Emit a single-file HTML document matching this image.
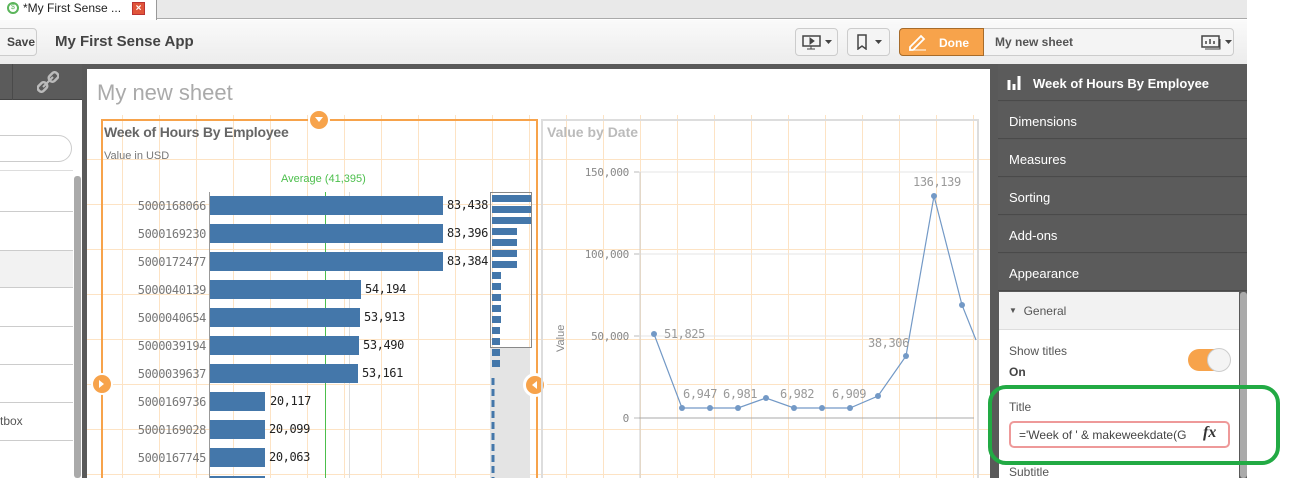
<!DOCTYPE html>
<html style="width:1293px;height:478px;overflow:hidden"><head><meta charset="utf-8"><style>
*{margin:0;padding:0;box-sizing:border-box}
body{width:1293px;height:478px;overflow:hidden;font-family:"Liberation Sans",sans-serif;background:#fff;position:relative}
.a{position:absolute}
.mono{font-family:"DejaVu Sans Mono","Liberation Mono",monospace;font-size:12px;letter-spacing:-0.4px}
.rp{left:998px;width:242px;height:37px;color:#fff;font-size:13px;padding:12px 0 0 11px;border-bottom:1px solid #4a4a4a;background:#5b5b5b}
</style></head><body>
<div style="position:absolute;left:0;top:0;width:1293px;height:478px;overflow:hidden">
<!-- tab bar -->
<div class="a" style="left:0;top:0;width:1247px;height:19px;background:#e9e9e9;border-bottom:1px solid #aaa"></div>
<div class="a" style="left:0;top:0;width:157px;height:20px;background:#fff;border-right:1px solid #999"></div>
<div class="a" style="left:7px;top:2px;width:12px;height:12px;border:2px solid #5bb55b;border-radius:50%;font-size:7px;color:#5bb55b;text-align:center;line-height:8px">$</div>
<div class="a" style="left:23px;top:1px;font-size:12px;color:#222">*My First Sense ...</div>
<div class="a" style="left:132px;top:2px;width:13px;height:13px;background:#e0553a;border:1px solid #b33;color:#fff;font-size:10px;font-weight:bold;text-align:center;line-height:11px">×</div>
<!-- toolbar -->
<div class="a" style="left:0;top:20px;width:1247px;height:44px;background:linear-gradient(#fafafa,#ececec)"></div>
<div class="a" style="left:-4px;top:28px;width:41px;height:28px;border:1px solid #ccc;border-radius:4px;background:#f4f4f4;font-size:12px;font-weight:bold;color:#444;padding:6px 0 0 10px">Save</div>
<div class="a" style="left:55px;top:33px;font-size:15px;font-weight:bold;color:#444">My First Sense App</div>
<div class="a" style="left:795px;top:28px;width:43px;height:28px;border:1px solid #ccc;border-radius:4px;background:#f4f4f4"></div>
<svg class="a" style="left:801px;top:34px" width="34" height="16"><rect x="2" y="2" width="17" height="10" fill="none" stroke="#444" stroke-width="1.5"/><path d="M9 4l4 3-4 3z M10 12v3 M6 15h8" fill="#444" stroke="#444"/><path d="M24 6h7l-3.5 4z" fill="#444"/></svg>
<div class="a" style="left:847px;top:28px;width:43px;height:28px;border:1px solid #ccc;border-radius:4px;background:#f4f4f4"></div>
<svg class="a" style="left:855px;top:34px" width="34" height="16"><path d="M3 1h8v14l-4-3-4 3z" fill="none" stroke="#444" stroke-width="1.5"/><path d="M20 6h7l-3.5 4z" fill="#444"/></svg>
<div class="a" style="left:899px;top:28px;width:335px;height:28px;border:1px solid #ccc;border-radius:4px;background:#f4f4f4"></div>
<div class="a" style="left:899px;top:28px;width:85px;height:28px;border:1px solid #a66b2a;border-radius:4px 0 0 4px;background:#f7a34b;color:#fff;font-weight:bold;font-size:12px;padding:7px 0 0 39px">Done</div>
<svg class="a" style="left:908px;top:33px" width="22" height="18"><path d="M2 14l11-11 3 3-11 11H2z" fill="none" stroke="#fff" stroke-width="1.8"/><path d="M1 17h17" stroke="#fff"/></svg>
<div class="a" style="left:995px;top:35px;font-size:12px;font-weight:bold;color:#555">My new sheet</div>
<svg class="a" style="left:1200px;top:34px" width="34" height="16"><rect x="2" y="2" width="17" height="11" fill="none" stroke="#444" stroke-width="1.5"/><path d="M6 10V7M10 10V5M14 10V7" stroke="#444" stroke-width="1.5"/><path d="M20 5v10H5" fill="none" stroke="#444"/><path d="M25 6h7l-3.5 4z" fill="#444"/></svg>
<!-- dark area -->
<div class="a" style="left:0;top:64px;width:1247px;height:414px;background:#595959"></div>
<!-- left panel -->
<div class="a" style="left:0;top:64px;width:82px;height:36px;background:#5b5b5b;border-bottom:1px solid #444"></div>
<div class="a" style="left:12px;top:64px;width:1px;height:36px;background:#4a4a4a"></div>
<svg class="a" style="left:37px;top:71px" width="22" height="22"><path d="M6 16l10-10" stroke="#bbb" stroke-width="2"/><rect x="2" y="11" width="7" height="10" rx="3" transform="rotate(45 5.5 16)" fill="none" stroke="#bbb" stroke-width="2.5"/><rect x="13" y="1" width="7" height="10" rx="3" transform="rotate(45 16.5 6)" fill="none" stroke="#bbb" stroke-width="2.5"/></svg>
<div class="a" style="left:0;top:100px;width:82px;height:378px;background:#fff"></div>
<div class="a" style="left:-20px;top:135px;width:92px;height:27px;border:1px solid #ccc;border-radius:14px"></div>
<div class="a" style="left:0;top:170px;width:73px;height:1px;background:#ddd"></div>
<div class="a" style="left:0;top:211px;width:73px;height:1px;background:#ccc"></div>
<div class="a" style="left:0;top:250px;width:73px;height:38px;background:#f2f2f2;border-top:1px solid #ccc;border-bottom:1px solid #ccc"></div>
<div class="a" style="left:0;top:326px;width:73px;height:1px;background:#ccc"></div>
<div class="a" style="left:0;top:364px;width:73px;height:1px;background:#ccc"></div>
<div class="a" style="left:0;top:402px;width:73px;height:1px;background:#ccc"></div>
<div class="a" style="left:0;top:440px;width:73px;height:1px;background:#ccc"></div>
<div class="a" style="left:0;top:414px;font-size:12px;color:#555">tbox</div>
<div class="a" style="left:74px;top:176px;width:7px;height:302px;background:#aaa;border-radius:3px"></div>
<!-- sheet -->
<div class="a" style="left:87px;top:69px;width:903px;height:409px;background:#fff"></div>
<div class="a" style="left:87px;top:115px;width:903px;height:363px;background-image:repeating-linear-gradient(90deg,transparent 0 36px,#fde3c4 36px 37px),repeating-linear-gradient(180deg,transparent 0 44px,#fde3c4 44px 45px);background-position:-1px 0,0 0"></div>
<div class="a" style="left:97px;top:80px;font-size:22px;color:#aaa">My new sheet</div>
<!-- bar chart -->
<div class="a" style="left:101px;top:119px;width:437px;height:370px;border:2px solid #f7a34b"></div>
<div class="a" style="left:308px;top:109px;width:22px;height:22px;border-radius:50%;background:#f7a34b;border:2px solid #fff"></div>
<svg class="a" style="left:314px;top:116px" width="10" height="8"><path d="M1 1h8L5 6z" fill="#fff"/></svg>
<div class="a" style="left:104px;top:124px;font-size:14px;font-weight:bold;color:#666;letter-spacing:-0.2px">Week of Hours By Employee</div>
<div class="a" style="left:104px;top:150px;font-size:11px;color:#777">Value in USD</div>
<div class="a" style="left:281px;top:173px;font-size:11px;color:#4cbf4c">Average (41,395)</div>
<div class="a" style="left:209px;top:192px;width:1px;height:286px;background:#999"></div>
<div class="a" style="left:325px;top:192px;width:1px;height:286px;background:#4cbf4c"></div>
<div class="a" style="left:349px;top:192px;width:1px;height:286px;background:#ddd"></div>
<div class="a mono" style="left:100px;top:0;width:106px;text-align:right;color:#777;line-height:28px;padding-top:192px">5000168066<br>5000169230<br>5000172477<br>5000040139<br>5000040654<br>5000039194<br>5000039637<br>5000169736<br>5000169028<br>5000167745</div>
<div class="a" style="left:210px;top:196px;width:233px;height:19px;background:#4477aa"></div>
<div class="a" style="left:210px;top:224px;width:233px;height:19px;background:#4477aa"></div>
<div class="a" style="left:210px;top:252px;width:233px;height:19px;background:#4477aa"></div>
<div class="a" style="left:210px;top:280px;width:151px;height:19px;background:#4477aa"></div>
<div class="a" style="left:210px;top:308px;width:150px;height:19px;background:#4477aa"></div>
<div class="a" style="left:210px;top:336px;width:149px;height:19px;background:#4477aa"></div>
<div class="a" style="left:210px;top:364px;width:148px;height:19px;background:#4477aa"></div>
<div class="a" style="left:210px;top:392px;width:55px;height:19px;background:#4477aa"></div>
<div class="a" style="left:210px;top:420px;width:55px;height:19px;background:#4477aa"></div>
<div class="a" style="left:210px;top:448px;width:55px;height:19px;background:#4477aa"></div>
<div class="a" style="left:210px;top:476px;width:55px;height:4px;background:#4477aa"></div>
<div class="a mono" style="left:447px;top:198px;color:#222">83,438</div>
<div class="a mono" style="left:447px;top:226px;color:#222">83,396</div>
<div class="a mono" style="left:447px;top:254px;color:#222">83,384</div>
<div class="a mono" style="left:365px;top:282px;color:#222">54,194</div>
<div class="a mono" style="left:364px;top:310px;color:#222">53,913</div>
<div class="a mono" style="left:363px;top:338px;color:#222">53,490</div>
<div class="a mono" style="left:362px;top:366px;color:#222">53,161</div>
<div class="a mono" style="left:270px;top:394px;color:#222">20,117</div>
<div class="a mono" style="left:269px;top:422px;color:#222">20,099</div>
<div class="a mono" style="left:269px;top:450px;color:#222">20,063</div>
<!-- mini scroller -->
<div class="a" style="left:490px;top:347px;width:40px;height:131px;background:#e4e4e4"></div>
<svg class="a" style="left:490px;top:192px" width="43" height="286">
<g fill="#4477aa">
<rect x="2" y="3" width="40" height="7"/><rect x="2" y="14" width="40" height="7"/><rect x="2" y="25" width="40" height="7"/>
<rect x="2" y="36" width="25" height="7"/><rect x="2" y="47" width="25" height="7"/><rect x="2" y="58" width="25" height="7"/><rect x="2" y="69" width="25" height="7"/>
<rect x="2" y="80" width="9" height="7"/><rect x="2" y="91" width="9" height="7"/><rect x="2" y="102" width="9" height="7"/><rect x="2" y="113" width="9" height="7"/><rect x="2" y="124" width="9" height="7"/><rect x="2" y="135" width="8" height="7"/><rect x="2" y="146" width="8" height="7"/><rect x="2" y="157" width="8" height="7"/><rect x="2" y="168" width="8" height="7"/>
</g>
<path d="M3 186V286" stroke="#4477aa" stroke-width="3" stroke-dasharray="7 4"/>
<rect x="0.5" y="0.5" width="41" height="155" fill="none" stroke="#888"/>
</svg>
<div class="a" style="left:91px;top:373px;width:22px;height:22px;border-radius:50%;background:#f7a34b;border:2px solid #fff"></div>
<svg class="a" style="left:98px;top:379px" width="8" height="10"><path d="M1 1v8l5-4z" fill="#fff"/></svg>
<div class="a" style="left:523px;top:373px;width:24px;height:24px;border-radius:50%;background:#f7a34b;border:3px solid #fff"></div>
<svg class="a" style="left:531px;top:380px" width="8" height="10"><path d="M6 1v8l-5-4z" fill="#fff"/></svg>
<!-- line chart -->
<div class="a" style="left:541px;top:119px;width:438px;height:370px;border:2px solid #ddd"></div>
<div class="a" style="left:547px;top:124px;font-size:14px;font-weight:bold;color:#bbb">Value by Date</div>
<svg class="a" style="left:541px;top:150px" width="440" height="328" font-family="DejaVu Sans Mono,Liberation Mono,monospace" font-size="11" fill="#888">
<g stroke="#e6e6e6"><path d="M98 22H433M98 104H433M98 186H433"/></g>
<path d="M99 22V328" stroke="#ccc"/>
<path d="M98 268H433" stroke="#aaa"/>
<g stroke="#bbb"><path d="M93 22h5M93 104h5M93 186h5M93 268h5"/></g>
<g text-anchor="end" letter-spacing="-0.3"><text x="88" y="26">150,000</text><text x="88" y="108">100,000</text><text x="88" y="190">50,000</text><text x="88" y="272">0</text></g>
<text x="23" y="202" transform="rotate(-90 23 202)" font-family="Liberation Sans" font-size="11">Value</text>
<polyline fill="none" stroke="#7399c6" stroke-width="1.2" points="113,184 141,258 169,258 197,258 225,248 253,258 281,258 309,258 337,246 365,206 393,46 421,155 435,190"/>
<g fill="#7399c6"><circle cx="113" cy="184" r="3"/><circle cx="141" cy="258" r="3"/><circle cx="169" cy="258" r="3"/><circle cx="197" cy="258" r="3"/><circle cx="225" cy="248" r="3"/><circle cx="253" cy="258" r="3"/><circle cx="281" cy="258" r="3"/><circle cx="309" cy="258" r="3"/><circle cx="337" cy="246" r="3"/><circle cx="365" cy="206" r="3"/><circle cx="393" cy="46" r="3"/><circle cx="421" cy="155" r="3"/></g>
<g font-size="12" fill="#999" letter-spacing="-0.4"><text x="123" y="188">51,825</text><text x="142" y="248">6,947</text><text x="182" y="248">6,981</text><text x="239" y="248">6,982</text><text x="291" y="248">6,909</text><text x="327" y="197">38,306</text><text x="372" y="36">136,139</text></g>
</svg>
<!-- right panel -->
<div class="a" style="left:998px;top:64px;width:249px;height:37px;background:#5b5b5b;border-bottom:1px solid #4a4a4a"></div>
<svg class="a" style="left:1007px;top:74px" width="18" height="16"><path d="M2 6v10M7 10v6M12 2v14" stroke="#fff" stroke-width="3"/></svg>
<div class="a" style="left:1033px;top:76px;color:#fff;font-weight:bold;font-size:13px">Week of Hours By Employee</div>
<div class="a rp" style="top:102px;width:249px">Dimensions</div>
<div class="a rp" style="top:140px;width:249px">Measures</div>
<div class="a rp" style="top:178px;width:249px">Sorting</div>
<div class="a rp" style="top:216px;width:249px">Add-ons</div>
<div class="a rp" style="top:254px;width:249px">Appearance</div>
<div class="a" style="left:999px;top:292px;width:240px;height:186px;background:#fff"></div>
<div class="a" style="left:999px;top:292px;width:240px;height:38px;background:#f2f2f2;border-bottom:1px solid #ddd;font-size:12px;color:#555;padding:12px 0 0 10px"><span style="font-size:8px;vertical-align:2px">▼</span>&nbsp;&nbsp;General</div>
<div class="a" style="left:1240px;top:292px;width:7px;height:186px;background:#aaa;border-radius:3px"></div>
<div class="a" style="left:1009px;top:344px;font-size:12px;color:#555">Show titles</div>
<div class="a" style="left:1009px;top:365px;font-size:12px;font-weight:bold;color:#444">On</div>
<div class="a" style="left:1188px;top:349px;width:42px;height:22px;border-radius:11px;background:#f7a34b"></div>
<div class="a" style="left:1207px;top:348px;width:24px;height:24px;border-radius:50%;background:#f4f4f4;border:1px solid #ccc"></div>
<div class="a" style="left:1009px;top:400px;font-size:12px;color:#555">Title</div>
<div class="a" style="left:1009px;top:421px;width:221px;height:27px;border:2px solid #ee9999;border-radius:5px;font-size:12px;color:#444;padding:5px 0 0 8px;white-space:nowrap;overflow:hidden">='Week of ' &amp; makeweekdate(G</div>
<div class="a" style="left:1203px;top:424px;font-family:'Liberation Serif',serif;font-style:italic;font-weight:bold;font-size:16px;color:#333;background:#fff">fx</div>
<div class="a" style="left:1009px;top:465px;font-size:12px;color:#555">Subtitle</div>
<div class="a" style="left:988px;top:385px;width:292px;height:80px;border:4px solid #22aa44;border-radius:18px"></div>
</div>
</body></html>
